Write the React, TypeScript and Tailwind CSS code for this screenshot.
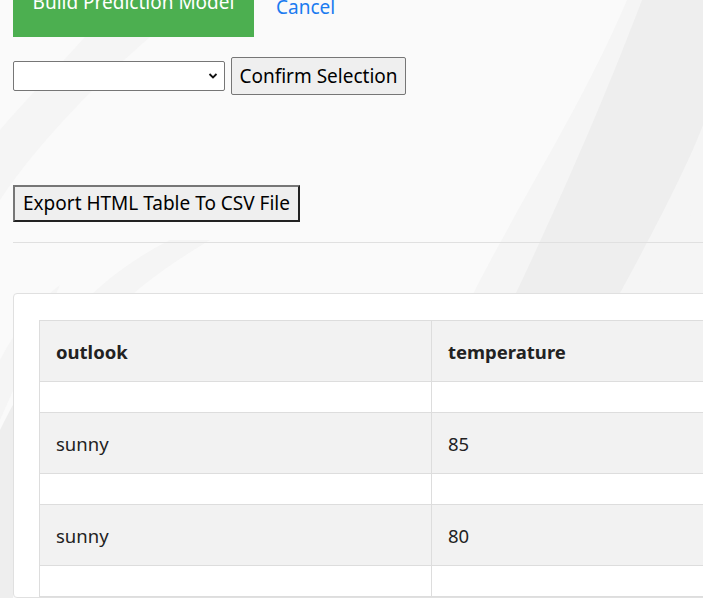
import React from "react";

const rows = [
  { outlook: "", temperature: "" },
  { outlook: "sunny", temperature: "85" },
  { outlook: "", temperature: "" },
  { outlook: "sunny", temperature: "80" },
  { outlook: "", temperature: "" },
];

function Backdrop() {
  // faint curved swooshes behind the page
  return (
    <svg
      className="pointer-events-none absolute inset-0 h-full w-full"
      viewBox="0 0 703 598"
      preserveAspectRatio="none"
    >
      <path d="M627 0 C 580 110, 520 200, 470 300 L 380 598 L 703 598 L 703 0 Z" fill="#f5f5f5" />
      <path d="M642 0 C 600 110, 560 200, 516 293 L 440 598 L 560 598 L 620 293 C 660 220, 690 160, 703 125 L 703 0 Z" fill="#eeeeee" />
      <path d="M655 293 C 675 250, 690 215, 703 190 L 703 300 L 660 300 Z" fill="#f5f5f5" />
      <path d="M150 37 C 100 80, 40 140, 0 200 L 0 130 C 30 95, 60 65, 85 37 Z" fill="#f5f5f5" />
      <path d="M0 360 C 15 330, 40 300, 60 285 L 0 420 Z" fill="#f5f5f5" />
      <path d="M0 430 C 5 420, 10 410, 13 405 L 13 598 L 0 598 Z" fill="#eeeeee" />
      <path d="M210 240 C 160 270, 120 300, 100 330 L 60 330 C 90 290, 130 260, 170 240 Z" fill="#f5f5f5" />
    </svg>
  );
}

export default function App() {
  return (
    <div className="relative min-h-screen overflow-hidden bg-[#fafafa] font-['Noto_Sans','Open_Sans',sans-serif] text-[#222]">
      <Backdrop />
      <div className="relative px-[13px]">
        <div className="-mt-[30px] flex items-start gap-[22px]">
          <button className="flex h-[67px] w-[241px] items-center justify-center bg-[#4caf50] pb-[2px] text-[19px] text-white">
            Build Prediction Model
          </button>
          <a href="#" className="pt-[23px] text-[19px] text-[#1a7bf0]">
            Cancel
          </a>
        </div>

        <div className="mt-[20px] flex items-center gap-[6px]">
          <div className="relative h-[30px] w-[212px] rounded-[2px] border border-[#767676] bg-white">
            <svg className="absolute right-[6px] top-[10px]" width="10" height="8" viewBox="0 0 10 8">
              <path d="M1.5 2 L5 5.5 L8.5 2" fill="none" stroke="#111" strokeWidth="1.8" />
            </svg>
          </div>
          <button className="h-[38px] w-[175px] rounded-[2px] border border-[#767676] bg-[#efefef] text-[19px] text-black">
            Confirm Selection
          </button>
        </div>

        <button className="mt-[90px] h-[37px] w-[287px] border-2 border-t-[#767676] border-l-[#767676] border-b-[#222] border-r-[#222] bg-[#efefef] text-[19px] text-black">
          Export HTML Table To CSV File
        </button>

        <div className="mt-[20px] h-px w-[900px] bg-[#e0e0e0]" />

        <div className="mt-[50px] w-[900px] rounded-[4px] border border-[#e0e0e0] bg-white pl-[25px] pt-[26px]">
          <table className="w-[800px] border-collapse text-[18.5px]">
            <thead>
              <tr className="bg-[#f2f2f2]">
                <th className="w-[392px] border border-[#dddddd] px-4 pb-[14px] pt-[16px] text-left font-bold leading-[30px]">
                  outlook
                </th>
                <th className="border border-[#dddddd] px-4 pb-[14px] pt-[16px] text-left font-bold leading-[30px]">
                  temperature
                </th>
              </tr>
            </thead>
            <tbody>
              {rows.map((r, i) => (
                <tr key={i} className={r.outlook ? "bg-[#f2f2f2]" : "bg-white"}>
                  <td className="border border-[#dddddd] px-4 pb-[14px] pt-[16px] leading-[30px]">
                    {r.outlook}
                  </td>
                  <td className="border border-[#dddddd] px-4 pb-[14px] pt-[16px] leading-[30px]">
                    {r.temperature}
                  </td>
                </tr>
              ))}
            </tbody>
          </table>
        </div>
      </div>
    </div>
  );
}
